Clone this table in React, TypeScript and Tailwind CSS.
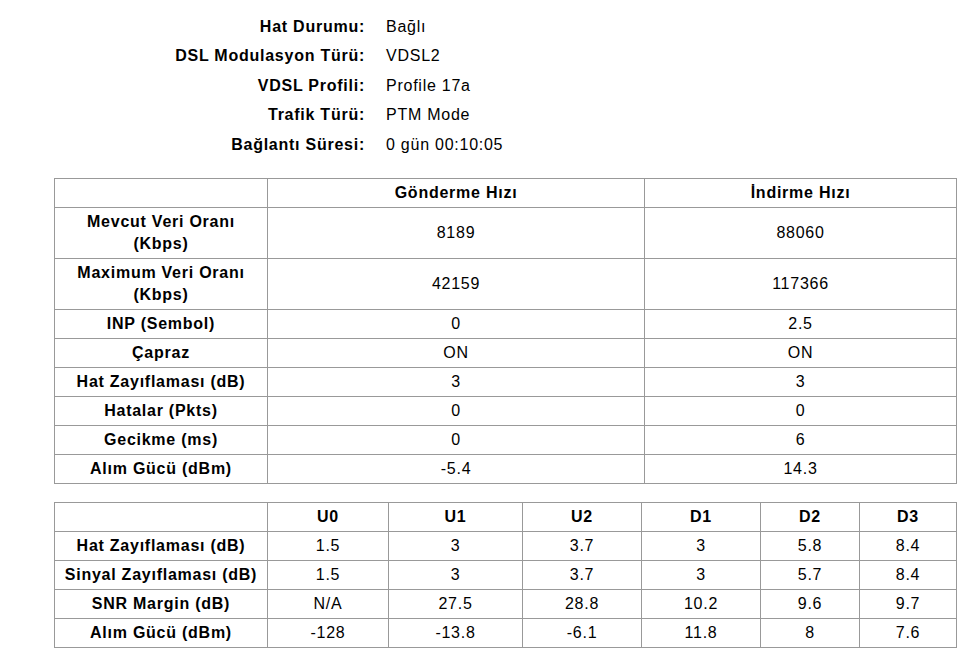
import React from "react";

const info: [string, string][] = [
  ["Hat Durumu:", "Bağlı"],
  ["DSL Modulasyon Türü:", "VDSL2"],
  ["VDSL Profili:", "Profile 17a"],
  ["Trafik Türü:", "PTM Mode"],
  ["Bağlantı Süresi:", "0 gün 00:10:05"],
];

const t1: [React.ReactNode, string, string][] = [
  [<>Mevcut Veri Oranı<br />(Kbps)</>, "8189", "88060"],
  [<>Maximum Veri Oranı<br />(Kbps)</>, "42159", "117366"],
  ["INP (Sembol)", "0", "2.5"],
  ["Çapraz", "ON", "ON"],
  ["Hat Zayıflaması (dB)", "3", "3"],
  ["Hatalar (Pkts)", "0", "0"],
  ["Gecikme (ms)", "0", "6"],
  ["Alım Gücü (dBm)", "-5.4", "14.3"],
];

const t2: [string, string[]][] = [
  ["Hat Zayıflaması (dB)", ["1.5", "3", "3.7", "3", "5.8", "8.4"]],
  ["Sinyal Zayıflaması (dB)", ["1.5", "3", "3.7", "3", "5.7", "8.4"]],
  ["SNR Margin (dB)", ["N/A", "27.5", "28.8", "10.2", "9.6", "9.7"]],
  ["Alım Gücü (dBm)", ["-128", "-13.8", "-6.1", "11.8", "8", "7.6"]],
];

const cell = "border border-[#999999] px-[2px] py-[3px] text-center leading-[22px]";

export default function App() {
  return (
    <div
      className="min-h-[655px] w-[963px] bg-white text-[16px] tracking-[0.75px] text-black"
      style={{ fontFamily: '"Liberation Sans", Arial, sans-serif' }}
    >
      <div className="grid grid-cols-[365px_auto] pt-[12px]">
        {info.map(([k, v]) => (
          <React.Fragment key={k}>
            <div className="flex h-[29.5px] items-center justify-end font-bold">{k}</div>
            <div className="flex h-[29.5px] items-center pl-[21px]">{v}</div>
          </React.Fragment>
        ))}
      </div>

      <div className="pl-[54px] pt-[18px]">
        <table className="w-[902px] table-fixed border-collapse">
          <colgroup>
            <col className="w-[213px]" />
            <col className="w-[377px]" />
            <col className="w-[312px]" />
          </colgroup>
          <tbody>
            <tr>
              <td className={cell}>&nbsp;</td>
              <td className={`${cell} font-bold`}>Gönderme Hızı</td>
              <td className={`${cell} font-bold`}>İndirme Hızı</td>
            </tr>
            {t1.map(([k, a, b], i) => (
              <tr key={i}>
                <td className={`${cell} font-bold`}>{k}</td>
                <td className={cell}>{a}</td>
                <td className={cell}>{b}</td>
              </tr>
            ))}
          </tbody>
        </table>

        <table className="mt-[18px] w-[902px] table-fixed border-collapse">
          <colgroup>
            <col className="w-[213px]" />
            <col className="w-[121px]" />
            <col className="w-[134px]" />
            <col className="w-[119px]" />
            <col className="w-[119px]" />
            <col className="w-[99px]" />
            <col className="w-[97px]" />
          </colgroup>
          <tbody>
            <tr>
              <td className={cell}>&nbsp;</td>
              {["U0", "U1", "U2", "D1", "D2", "D3"].map((h) => (
                <td key={h} className={`${cell} font-bold`}>{h}</td>
              ))}
            </tr>
            {t2.map(([k, vals]) => (
              <tr key={k}>
                <td className={`${cell} font-bold`}>{k}</td>
                {vals.map((v, j) => (
                  <td key={j} className={cell}>{v}</td>
                ))}
              </tr>
            ))}
          </tbody>
        </table>
      </div>
    </div>
  );
}
